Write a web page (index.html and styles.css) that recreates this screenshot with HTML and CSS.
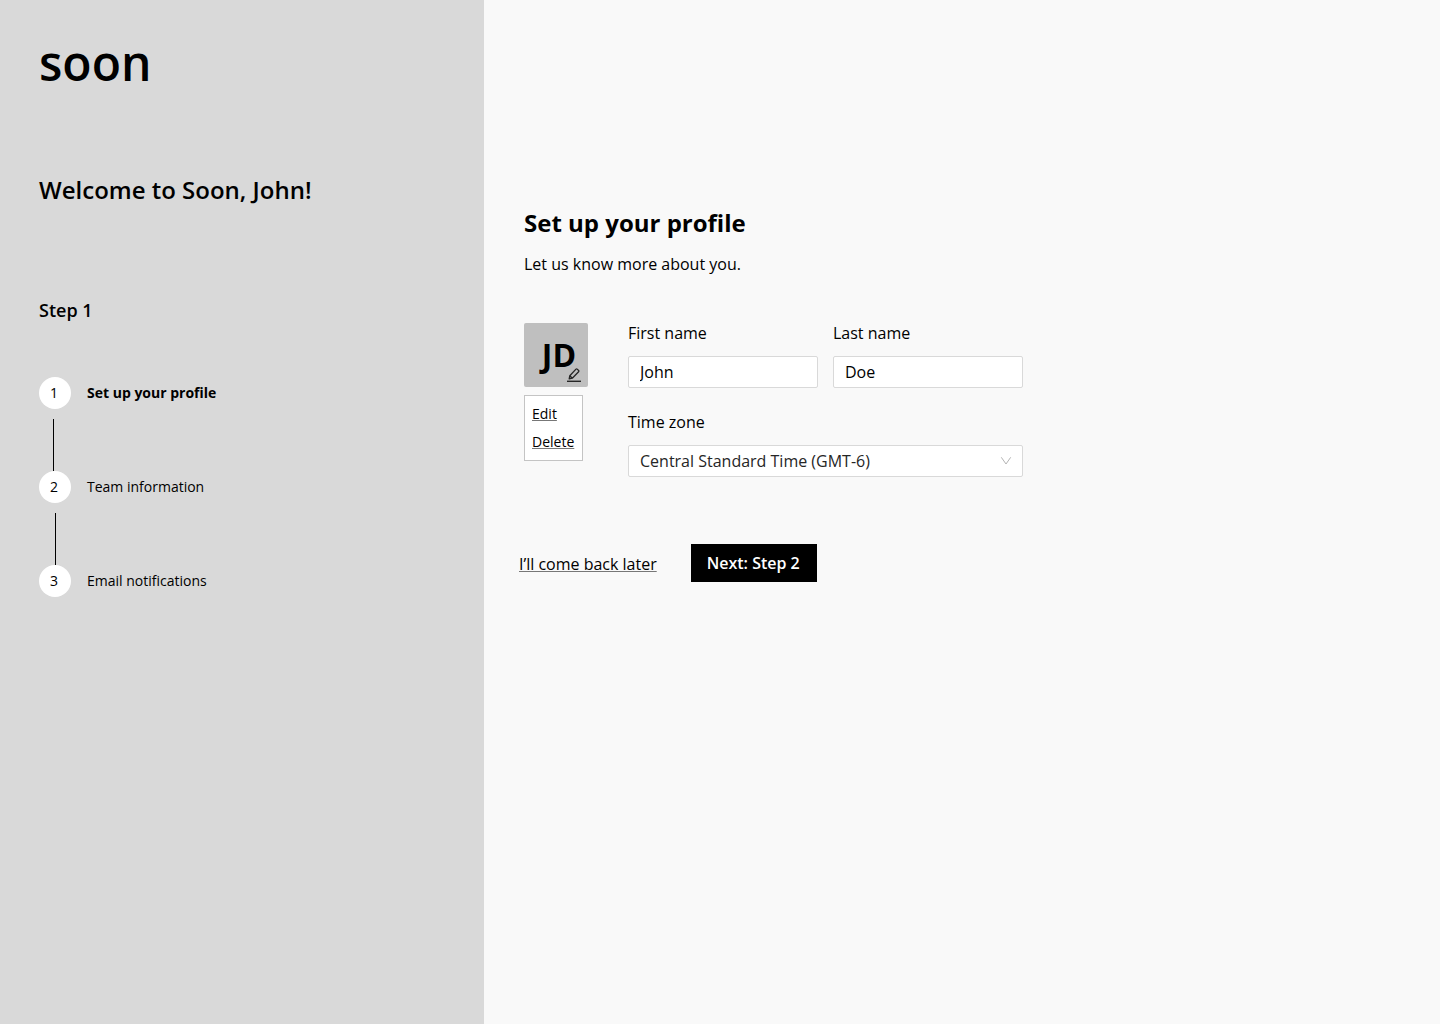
FILE: index.html
```html
<!DOCTYPE html>
<html lang="en">
<head>
  <meta charset="utf-8">
  <meta name="viewport" content="width=device-width, initial-scale=1">
  <title>Soon – Set up your profile</title>
  <link rel="stylesheet" href="styles.css">
</head>
<body>
  <div class="layout">
    <aside class="sidebar">
      <div class="logo">soon</div>
      <p class="welcome">Welcome to Soon, John!</p>
      <p class="current-step">Step 1</p>
      <ol class="steps">
        <li class="step step-active">
          <span class="step-number">1</span>
          <span class="step-label">Set up your profile</span>
          <span class="step-line"></span>
        </li>
        <li class="step">
          <span class="step-number">2</span>
          <span class="step-label">Team information</span>
          <span class="step-line"></span>
        </li>
        <li class="step">
          <span class="step-number">3</span>
          <span class="step-label">Email notifications</span>
        </li>
      </ol>
    </aside>
    <main class="content">
      <h1 class="title">Set up your profile</h1>
      <p class="subtitle">Let us know more about you.</p>
      <form class="profile-form">
        <div class="profile">
          <div class="photo">
            <div class="avatar">
              <span class="initials">JD</span>
              <svg class="edit-icon" viewBox="0 0 16 16" fill="none" stroke="#262626" aria-hidden="true">
                <path d="M1 14.300h14" stroke-width="1.400"/>
                <path d="M3.200 11.800l.6-3.100L10 2.100q.6-.6 1.200 0l1.400 1.400q.6.600 0 1.200L6.300 11.200 3.200 11.800zM3.800 8.700l2.500 2.500" stroke-width="1.300" stroke-linejoin="round"/>
              </svg>
            </div>
            <div class="photo-menu">
              <a class="menu-link" href="#edit">Edit</a>
              <a class="menu-link" href="#delete">Delete</a>
            </div>
          </div>
          <div class="fields">
            <div class="field">
              <label class="label" for="first-name">First name</label>
              <input class="control" id="first-name" type="text" value="John">
            </div>
            <div class="field">
              <label class="label" for="last-name">Last name</label>
              <input class="control" id="last-name" type="text" value="Doe">
            </div>
            <div class="field field-wide">
              <label class="label" for="time-zone">Time zone</label>
              <div class="select-wrap">
                <select class="control select" id="time-zone">
                  <option>Central Standard Time (GMT-6)</option>
                </select>
                <svg class="chevron" viewBox="0 0 12 12" fill="none" stroke="#b4b4b4" aria-hidden="true">
                  <path d="M1.300 2.300 6 9l4.700-6.700"/>
                </svg>
              </div>
            </div>
          </div>
        </div>
        <div class="actions">
          <a class="later" href="#later">I’ll come back later</a>
          <button class="next" type="button">Next: Step 2</button>
        </div>
      </form>
    </main>
  </div>
</body>
</html>
```

FILE: styles.css
```css
* {
  box-sizing: border-box;
}

body {
  margin: 0;
  font-family: "Open Sans", "Noto Sans", sans-serif;
  font-size: 16px;
  line-height: 24px;
  color: #000;
  background: #f9f9f9;
}

p, h1, ol {
  margin: 0;
  padding: 0;
}

a {
  color: inherit;
  text-decoration-thickness: 1px;
  text-underline-offset: 1px;
  text-decoration-color: #777;
  text-decoration-skip-ink: none;
}

.layout {
  display: grid;
  grid-template-columns: 121fr 239fr;
  min-height: 100vh;
}

/* Sidebar */
.sidebar {
  padding: 32px 39px;
  background: #d9d9d9;
}

.logo {
  font-size: 48px;
  line-height: 62px;
  font-weight: 600;
}

.welcome {
  margin-top: 80px;
  font-size: 24px;
  line-height: 32px;
  font-weight: 600;
}

.current-step {
  margin-top: 92px;
  font-size: 18px;
  line-height: 24px;
  font-weight: 600;
}

.steps {
  margin-top: 55px;
  list-style: none;
}

.step {
  display: grid;
  grid-template-columns: 32px 1fr;
  column-gap: 16px;
  align-items: center;
  font-size: 14px;
}

.step-number {
  height: 32px;
  padding-right: 2px;
  border-radius: 50%;
  background: #fff;
  line-height: 32px;
  text-align: center;
}

.step-active .step-label {
  font-weight: 700;
}

.step-line {
  width: 1px;
  height: 52px;
  margin: 10px 0 0 16px;
  background: #000;
}

.step-active .step-line {
  margin-left: 14px;
}

/* Profile form */
.content {
  padding: 207px 40px 40px;
}

.title {
  font-size: 24px;
  line-height: 32px;
  font-weight: 700;
}

.subtitle {
  margin-top: 13px;
}

.profile-form {
  margin-top: 47px;
}

.profile {
  display: flex;
  gap: 40px;
}

.photo {
  display: flex;
  flex-direction: column;
  align-items: flex-start;
  gap: 8px;
}

.avatar {
  position: relative;
  display: grid;
  place-items: center;
  width: 64px;
  height: 64px;
  padding-left: 6px;
  border-radius: 2px;
  background: #bfbfbf;
}

.initials {
  font-size: 32px;
  line-height: 40px;
  font-weight: 700;
}

.edit-icon {
  position: absolute;
  right: 6px;
  bottom: 4px;
  width: 16px;
  height: 16px;
}

.photo-menu {
  display: flex;
  flex-direction: column;
  gap: 4px;
  padding: 6px 8px 6px 7px;
  border: 1px solid #c4c4c4;
  background: #fff;
}

.menu-link {
  font-size: 14px;
}

.fields {
  display: grid;
  grid-template-columns: 1fr 1fr;
  gap: 24px 15px;
  flex: 0 1 395px;
}

.field {
  display: flex;
  flex-direction: column;
  gap: 12px;
  min-width: 0;
}

.field-wide {
  grid-column: 1 / -1;
}

.label {
  line-height: 21px;
}

.control {
  width: 100%;
  height: 32px;
  padding: 0 11px;
  border: 1px solid #d9d9d9;
  border-radius: 2px;
  background: #fff;
  color: #000;
  font: inherit;
}

.select-wrap {
  position: relative;
  display: flex;
}

.select {
  appearance: none;
  color: #262626;
}

.chevron {
  position: absolute;
  top: 10px;
  right: 11px;
  width: 12px;
  height: 12px;
  pointer-events: none;
}

.actions {
  display: flex;
  align-items: center;
  gap: 34px;
  margin: 67px 0 0 -5px;
}

.later {
  padding-top: 2px;
}

.next {
  height: 38px;
  padding: 0 17px 0 16px;
  border: 0;
  background: #000;
  color: #fff;
  font: inherit;
  font-weight: 600;
}
```
